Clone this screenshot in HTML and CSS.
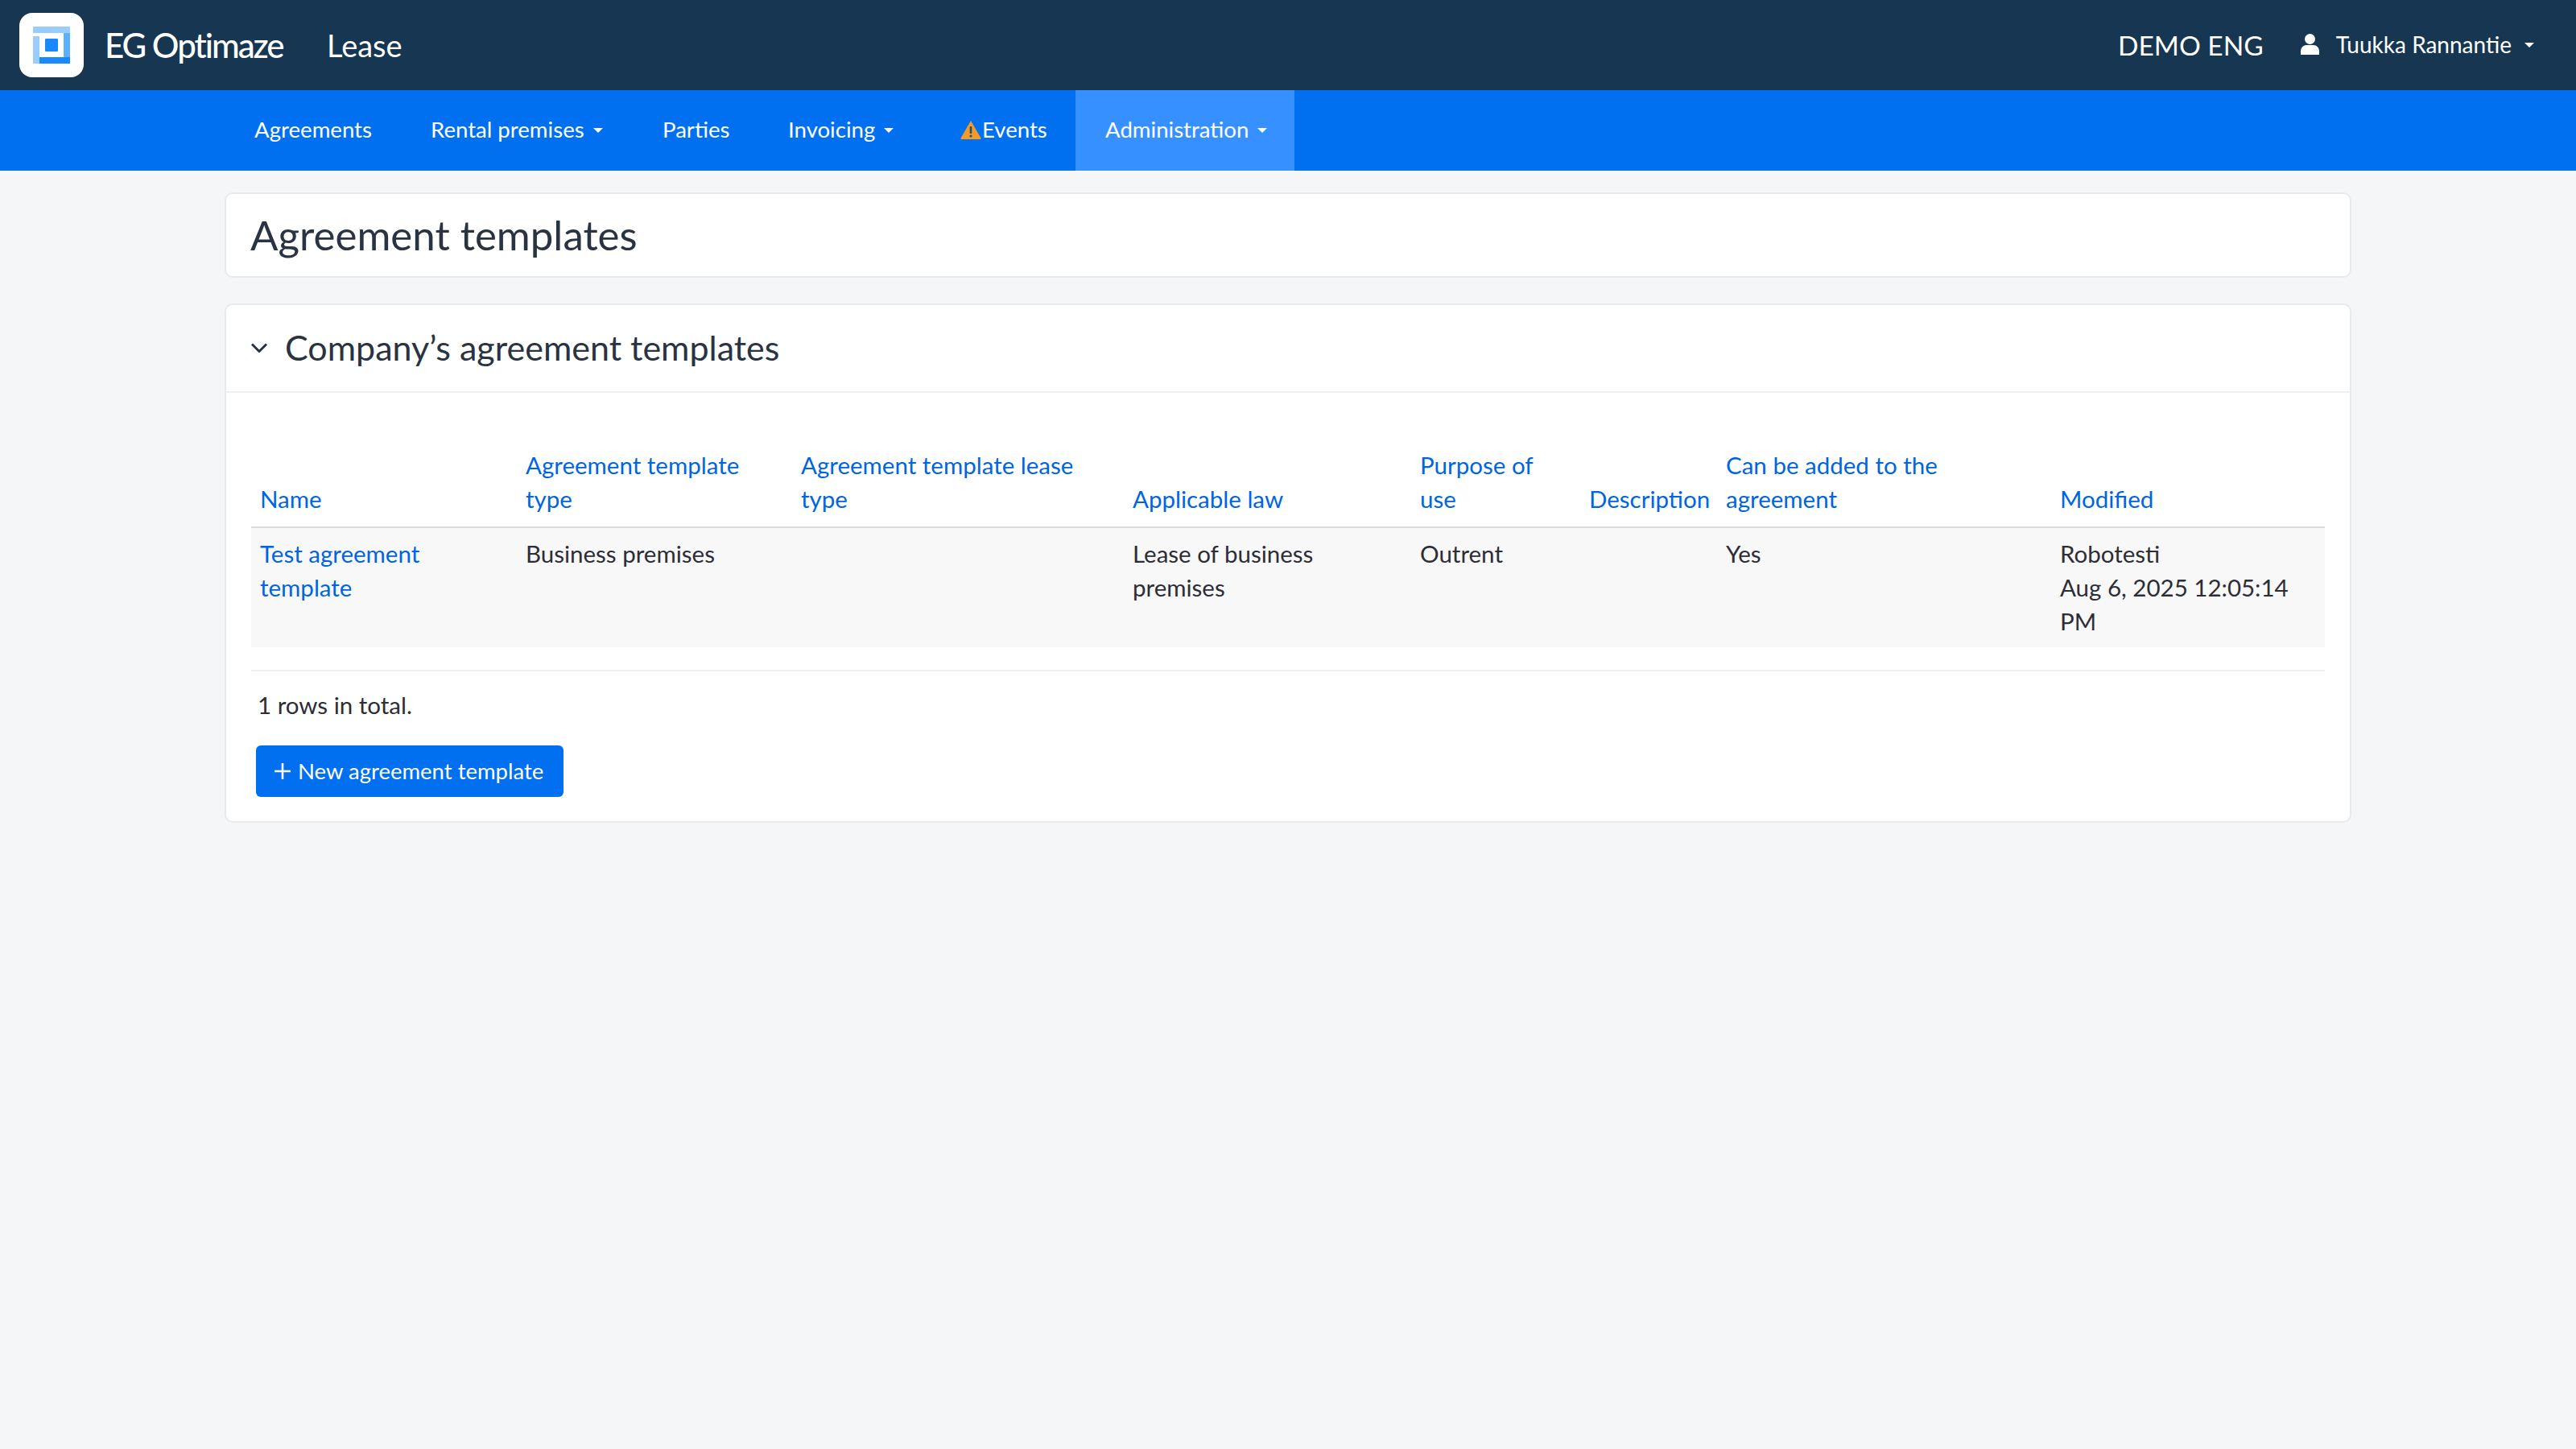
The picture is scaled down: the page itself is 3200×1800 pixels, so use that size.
FILE: index.html
```html
<!DOCTYPE html>
<html lang="en">
<head>
<meta charset="utf-8">
<title>Agreement templates</title>
<link rel="stylesheet" href="styles.css">
</head>
<body>
<header class="topbar">
  <div class="logo">
    <svg viewBox="0 0 80 80" width="80" height="80">
      <rect x="17" y="17" width="46" height="8" fill="#99ccff"/>
      <rect x="17" y="29" width="8" height="34" fill="#99ccff"/>
      <rect x="55" y="25" width="8" height="30" fill="#5cb0ff"/>
      <rect x="25" y="55" width="38" height="8" fill="#1a88ff"/>
      <rect x="32" y="32" width="16" height="16" rx="1" fill="#1a88ff"/>
    </svg>
  </div>
  <div class="brand">EG Optimaze</div>
  <div class="product">Lease</div>
  <div class="top-right">
    <span class="company">DEMO ENG</span>
    <svg class="person" viewBox="0 0 23 26" width="23" height="26"><circle cx="11.5" cy="6.5" r="6.5" fill="#fff"/><path d="M0 26v-4c0-5 3.5-8 7-8h9c3.5 0 7 3 7 8v4z" fill="#fff"/></svg>
    <span class="username">Tuukka Rannantie</span>
    <span class="caret caret-user"></span>
  </div>
</header>
<nav class="mainnav">
  <a class="nav-item item-agreements">Agreements</a>
  <a class="nav-item item-rental">Rental premises<span class="caret"></span></a>
  <a class="nav-item item-parties">Parties</a>
  <a class="nav-item item-invoicing">Invoicing<span class="caret"></span></a>
  <a class="nav-item item-events"><svg class="warn" viewBox="0 0 26 24" width="26" height="24"><path d="M13 1 25.5 22.5a1 1 0 0 1-.9 1.5H1.4a1 1 0 0 1-.9-1.5z" fill="#f59b23"/><rect x="11.7" y="8" width="2.6" height="9" rx="1" fill="#1c4f8f"/><circle cx="13" cy="20" r="1.6" fill="#1c4f8f"/></svg>Events</a>
  <a class="nav-item item-admin active">Administration<span class="caret"></span></a>
</nav>
<main class="page">
  <section class="card title-card"><h1>Agreement templates</h1></section>
  <section class="card">
    <div class="card-header">
      <svg class="chevron" viewBox="0 0 22 12" width="22" height="12"><path d="M2 1.5 11 10.5 20 1.5" fill="none" stroke="#2a3342" stroke-width="3"/></svg>
      <h2>Company’s agreement templates</h2>
    </div>
    <div class="card-body">
      <table class="grid">
        <thead>
          <tr>
            <th>Name</th>
            <th>Agreement template<br>type</th>
            <th>Agreement template lease<br>type</th>
            <th>Applicable law</th>
            <th>Purpose of<br>use</th>
            <th>Description</th>
            <th>Can be added to the<br>agreement</th>
            <th>Modified</th>
          </tr>
        </thead>
        <tbody>
          <tr>
            <td><a class="link">Test agreement<br>template</a></td>
            <td>Business premises</td>
            <td></td>
            <td>Lease of business<br>premises</td>
            <td>Outrent</td>
            <td></td>
            <td>Yes</td>
            <td>Robotesti<br>Aug 6, 2025 12:05:14<br>PM</td>
          </tr>
        </tbody>
      </table>
      <div class="table-foot">1 rows in total.</div>
      <button class="btn"><svg viewBox="0 0 22 22" width="22" height="22"><path d="M11 1v20M1 11h20" stroke="#fff" stroke-width="2.6" fill="none"/></svg>New agreement template</button>
    </div>
  </section>
</main>
</body>
</html>
```
FILE: styles.css
```css
* { box-sizing: border-box; }
html, body { margin: 0; height: 100%; }
body {
  background: #f5f6f8;
  font-family: "Lato", "Noto Sans", sans-serif;
  font-size: 29.5px;
  line-height: 42px;
  color: #2d2d35;
}
.topbar {
  height: 112px;
  background: #163651;
  color: #fff;
  display: flex;
  align-items: center;
  padding-left: 24px;
  padding-right: 52px;
}
.logo {
  width: 80px;
  height: 80px;
  background: #fff;
  border-radius: 16px;
  flex: none;
}
.logo svg { display: block; }
.brand { margin-left: 26px; font-size: 42px; font-weight: 500; width: 276px; letter-spacing: -2px; }
.product { font-size: 38px; }
.top-right { margin-left: auto; display: flex; align-items: center; }
.company { font-size: 33.5px; }
.person { margin-left: 46px; margin-top: -2px; }
.username { margin-left: 21px; font-size: 28px; margin-top: -2px; }
.caret {
  display: inline-block;
  width: 0;
  height: 0;
  margin-left: 10px;
  vertical-align: 2px;
  border-top: 6px solid #fff;
  border-left: 6px solid transparent;
  border-right: 6px solid transparent;
}
.caret-user { margin-left: 16px; }
.mainnav {
  height: 100px;
  background: #006ff0;
  display: flex;
  padding-left: 280px;
  font-size: 27.6px;
}
.nav-item {
  display: flex;
  align-items: center;
  color: #fff;
  padding: 0 36px 3px;
  white-space: nowrap;
}
.nav-item .caret { margin-left: 11px; margin-top: 3px; }
.item-agreements { width: 219px; }
.item-rental { width: 288px; }
.item-parties { width: 156px; }
.item-invoicing { width: 250px; }
.item-events { width: 143px; padding-left: 0; padding-right: 0; }
.item-admin { width: 272px; padding-left: 37px; }
.active { background: #3790ff; }
.warn { margin-right: 1px; }
.page { padding: 27px 279px 0; display: flex; flex-direction: column; gap: 32px; }
.card {
  background: #fff;
  border: 2px solid #e9eaec;
  border-radius: 10px;
}
.title-card { height: 106px; display: flex; align-items: center; padding-left: 30px; }
h1 { margin: 0; font-size: 51px; font-weight: 400; line-height: 60px; color: #2a3342; }
.card-header {
  height: 109px;
  display: flex;
  align-items: center;
  border-bottom: 2px solid #eeeff1;
  padding: 0 0 2px 30px;
}
.chevron { flex: none; margin-right: 21px; }
h2 { margin: 0; font-size: 43px; font-weight: 400; line-height: 50px; color: #2a3342; }
.card-body { padding: 60px 31px 30px 31px; }
.grid { width: 2576px; border-collapse: collapse; table-layout: fixed; }
.grid th, .grid td { padding: 11px 11px; vertical-align: top; text-align: left; font-weight: 400; }
.grid th { vertical-align: bottom; color: #0065e0; border-bottom: 2px solid #dcdcdc; padding-top: 9px; padding-bottom: 13px; }
.grid tbody tr { background: #f8f8f9; }
.grid th:nth-child(1) { width: 330px; }
.grid th:nth-child(2) { width: 342px; }
.grid th:nth-child(3) { width: 412px; }
.grid th:nth-child(4) { width: 357px; }
.grid th:nth-child(5) { width: 210px; }
.grid th:nth-child(6) { width: 170px; }
.grid th:nth-child(7) { width: 415px; }
.grid th:nth-child(8) { width: 340px; }
.link { color: #0065e0; }
.table-foot {
  margin-top: 28px;
  border-top: 2px solid #eeeff1;
  padding: 21px 0 0 8px;
  height: 94px;
}
.btn {
  display: flex;
  align-items: center;
  gap: 8px;
  margin-left: 6px;
  width: 382px;
  height: 64px;
  padding: 0 22px;
  background: #006ff0;
  border: 0;
  border-radius: 6px;
  color: #fff;
  font: inherit;
  font-size: 27.5px;
  white-space: nowrap;
}
```
